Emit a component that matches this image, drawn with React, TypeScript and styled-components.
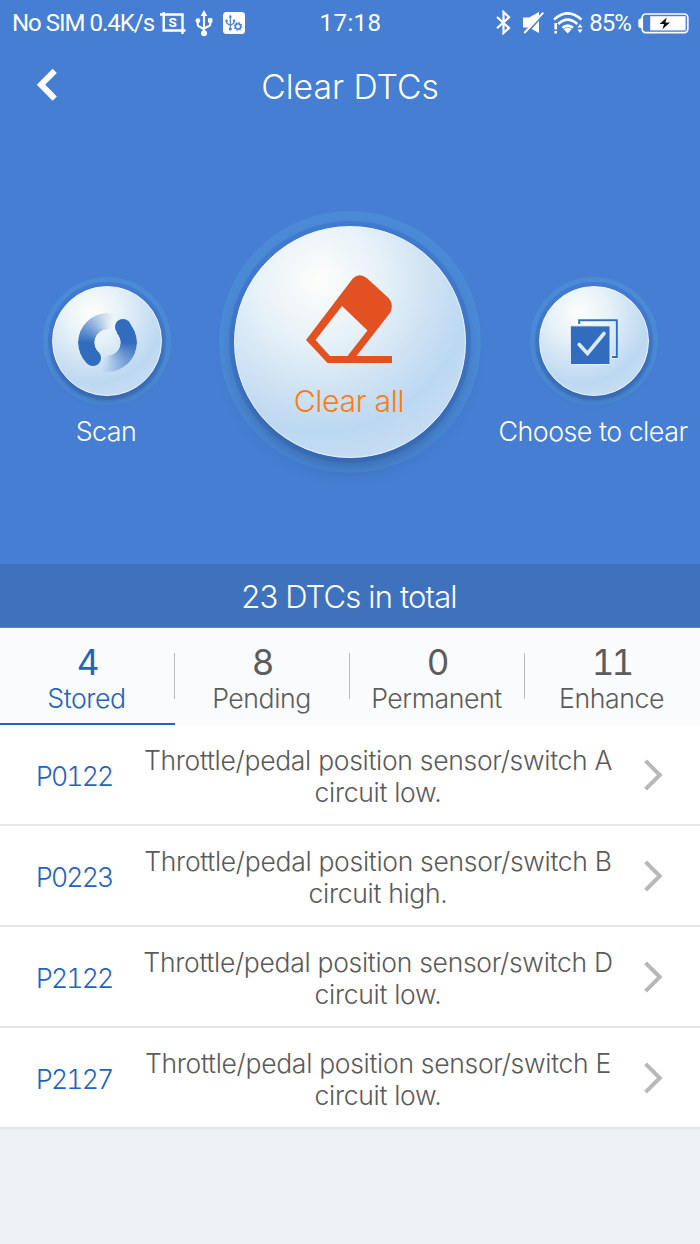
import React from 'react';
import styled, { createGlobalStyle } from 'styled-components';

const GlobalStyle = createGlobalStyle`
  *, *::before, *::after { box-sizing: border-box; }
  body { margin: 0; background: #edf1f5; font-family: Inter, "Liberation Sans", sans-serif; font-weight: 300; }
`;

const Screen = styled.div`
  width: 700px;
  height: 1244px;
  overflow: hidden;
  display: flex;
  flex-direction: column;
  background: #edf1f5;
`;

const Hero = styled.header`
  height: 564px;
  background: #457ed2;
  color: #fff;
`;

const StatusBar = styled.div`
  height: 46px;
  display: grid;
  grid-template-columns: 1fr auto 1fr;
  align-items: center;
  padding: 0 11px 0 12px;
  font-family: Roboto, "Liberation Sans", sans-serif;
  font-weight: 400;
  line-height: 46px;
`;

const StatusGroup = styled.div<{ $end?: boolean }>`
  display: flex;
  align-items: center;
  justify-content: ${p => (p.$end ? 'flex-end' : 'flex-start')};
  svg { display: block; flex: none; }
`;

const StatusText = styled.span<{ $track?: number; $gap?: number }>`
  font-size: 24px;
  letter-spacing: ${p => p.$track ?? 0}px;
  margin-left: ${p => p.$gap ?? 0}px;
  white-space: pre;
`;

const TitleBar = styled.div`
  height: 80px;
  display: grid;
  grid-template-columns: 100px 1fr 100px;
  align-items: center;
`;

const BackButton = styled.button`
  border: 0;
  padding: 0 0 5px 36px;
  background: none;
  display: flex;
`;

const Title = styled.h1`
  margin: 0;
  padding-top: 1px;
  text-align: center;
  font-size: 33.7px;
  font-weight: 300;
  line-height: 80px;
`;

const Actions = styled.div`
  padding-top: 85px;
  display: grid;
  grid-template-columns: 213px 274px 213px;
  justify-items: center;
  align-items: start;
`;

const Action = styled.div<{ $small?: boolean }>`
  display: flex;
  flex-direction: column;
  align-items: center;
  padding-top: ${p => (p.$small ? 66 : 0)}px;
`;

const Ring = styled.div<{ $size: number; $band: number }>`
  width: ${p => p.$size}px;
  height: ${p => p.$size}px;
  border-radius: 50%;
  border: ${p => p.$band}px solid #4b8ad6;
  background: #437bd0;
  display: flex;
  align-items: center;
  justify-content: center;
`;

const Disk = styled.button<{ $size: number }>`
  flex: none;
  width: ${p => p.$size}px;
  height: ${p => p.$size}px;
  padding: 0;
  border: 1.5px solid #eef6fd;
  border-radius: 50%;
  display: flex;
  flex-direction: column;
  align-items: center;
  justify-content: center;
  font: inherit;
  background: radial-gradient(circle at 36% 23%, #fdfefb 0%, #e6f1f8 28%, #d2e4f4 46%, #bcd8f1 66%, #cce0f5 90%, #d3e5f7 100%);
  box-shadow: 0 ${p => p.$size * 0.045}px ${p => p.$size * 0.07}px rgba(46, 88, 150, 0.6);
`;

const DiskLabel = styled.span`
  margin: 17px 2px 0 0;
  color: #fd7c14;
  font-size: 30.2px;
  letter-spacing: -0.3px;
  line-height: 40px;
`;

const ActionLabel = styled.span`
  margin: 8px 1px 0 0;
  font-size: 26.8px;
  letter-spacing: -0.5px;
  line-height: 36px;
  white-space: nowrap;
`;

const Swirl = styled.span`
  position: relative;
  width: 59px;
  height: 59px;
  margin: 2px 0 0 2px;
  &::before {
    content: '';
    position: absolute;
    inset: 0;
    border-radius: 50%;
    background: conic-gradient(#316cbe1c 0deg, #316cbe00 14deg, #316cbe00 44deg, #316cbe 45deg, #316cbe 90deg, #316cbe1c 180deg, #316cbe00 194deg, #316cbe00 224deg, #316cbe 225deg, #316cbe 270deg, #316cbe1c 360deg);
    mask: radial-gradient(circle, transparent 12.8px, #000 13.4px);
  }
`;

const SwirlCap = styled.i<{ $x: number; $y: number }>`
  position: absolute;
  left: ${p => p.$x}px;
  top: ${p => p.$y}px;
  width: 16px;
  height: 16px;
  border-radius: 50%;
  background: #316cbe;
`;

const Total = styled.div`
  height: 64px;
  padding-right: 2px;
  background: #3f72bd;
  border-bottom: 1px solid #6289c7;
  color: #fff;
  text-align: center;
  font-size: 31px;
  letter-spacing: -0.85px;
  line-height: 66px;
`;

const Tabs = styled.nav`
  height: 97px;
  display: grid;
  grid-template-columns: repeat(4, 175px);
  background: #fafbfd;
`;

const Tab = styled.button<{ $active?: boolean }>`
  position: relative;
  padding: 15px 2px 0 0;
  border: 0;
  border-bottom: 2px solid ${p => (p.$active ? '#2263bd' : 'transparent')};
  background: none;
  font: inherit;
  color: ${p => (p.$active ? '#2263bd' : '#5c5c5c')};
  display: flex;
  flex-direction: column;
  align-items: center;
  &:not(:first-child)::before {
    content: '';
    position: absolute;
    left: -1px;
    top: 25px;
    width: 1px;
    height: 46px;
    background: #b9bbbd;
  }
`;

const Count = styled.span`
  font-size: 35px;
  font-weight: 400;
  line-height: 38px;
  font-variant-numeric: tabular-nums;
  letter-spacing: -3px;
`;

const TabLabel = styled.span`
  font-size: 26.7px;
  letter-spacing: -0.45px;
  line-height: 34px;
`;

const List = styled.ul`
  margin: 0;
  padding: 0;
  list-style: none;
`;

const Row = styled.li`
  height: 101px;
  display: grid;
  grid-template-columns: 106px 470px 1fr;
  padding-left: 37px;
  align-items: center;
  background: #fff;
  border-bottom: 2px solid #e4e5e9;
`;

const Code = styled.span`
  color: #2463bd;
  font-size: 26.6px;
  font-variant-numeric: tabular-nums;
  letter-spacing: -1.8px;
  margin-left: -1px;
  padding-top: 3px;
`;

const Description = styled.p`
  margin: 0;
  padding-top: 3px;
  text-align: center;
  white-space: pre;
  color: #5a5a5a;
  font-size: 26.5px;
  letter-spacing: -0.3px;
  line-height: 32px;
`;

const rows = [
  ['P0122', 'A', 'low'],
  ['P0223', 'B', 'high'],
  ['P2122', 'D', 'low'],
  ['P2127', 'E', 'low'],
];

const tabs: [number, string][] = [[4, 'Stored'], [8, 'Pending'], [0, 'Permanent'], [11, 'Enhance']];

const ScreenshotIcon = () => (
  <svg width="26" height="24" viewBox="0 0 26 24" style={{ marginLeft: 6 }} fill="none" stroke="#fff" strokeWidth="2.4">
    <path d="M0 3.5H22.5V23M3.7 1V19.5H25.5" />
    <text x="12.6" y="16.2" fontSize="13.5" fontWeight="700" fill="#fff" stroke="none" textAnchor="middle" fontFamily="Roboto">S</text>
  </svg>
);

const UsbIcon = () => (
  <svg width="18" height="27" viewBox="0 0 18 27" style={{ marginLeft: 9 }} fill="none" stroke="#fff" strokeWidth="2.1">
    <path d="M9 4V22M2.7 11V14.5Q2.7 16 4 16.5L9 19M15.3 10V14Q15.3 15.3 14 16L9 18.5" />
    <path d="M9 0L12.3 6H5.7Z" fill="#fff" stroke="none" />
    <circle cx="9" cy="23.3" r="3" fill="#fff" stroke="none" />
    <circle cx="2.9" cy="10.6" r="2.4" fill="#fff" stroke="none" />
    <rect x="13" y="8.2" width="4.4" height="4.4" fill="#fff" stroke="none" />
  </svg>
);

const UsbDebugIcon = () => (
  <svg width="22" height="22" viewBox="0 0 22 22" style={{ marginLeft: 10 }} fill="none" stroke="#457ed2" strokeWidth="1.2">
    <rect width="22" height="22" rx="3.5" fill="#fff" stroke="none" />
    <path d="M7.3 4.5V17M3.5 8.5V11L7.3 13.5M11 8.5V11L7.3 13.5" />
    <path d="M7.3 2.4L9 5.6H5.6Z" fill="#457ed2" stroke="none" />
    <circle cx="7.3" cy="17" r="1.6" fill="#457ed2" stroke="none" />
    <circle cx="3.6" cy="8.8" r="1.2" fill="#457ed2" stroke="none" />
    <circle cx="11" cy="8.8" r="1.2" fill="#457ed2" stroke="none" />
    <circle cx="15" cy="14.4" r="2.6" strokeWidth="1.5" />
    <circle cx="15" cy="14.4" r="3.8" strokeWidth="1.2" strokeDasharray="1.4 1.58" />
  </svg>
);

const BluetoothIcon = () => (
  <svg width="15" height="26" viewBox="0 0 15 26" fill="none" stroke="#fff" strokeWidth="2.2">
    <path d="M1 7L13 18L7.5 23V2L13 7.3L1 18.3" />
  </svg>
);

const MutedIcon = () => (
  <svg width="21" height="22" viewBox="0 0 21 22" style={{ marginLeft: 12 }}>
    <path d="M0 5.5H6L16 0V21L6 15.5H0Z" fill="#fff" />
    <path d="M2.9 22L21.9 1" stroke="#457ed2" strokeWidth="1.8" />
    <path d="M1.3 21L20.3 0.6" stroke="#fff" strokeWidth="1.9" />
  </svg>
);

const WifiIcon = () => (
  <svg width="30" height="22" viewBox="0 0 30 22" style={{ marginLeft: 9 }} fill="none" stroke="#fff" strokeWidth="2.6">
    <path d="M1 7.6Q14.5 -5 28.5 7.6M5.2 12Q14.5 3.3 24.3 12M9.4 15.8Q14.8 11.3 20 15.8" />
    <path d="M10.7 17.2Q14.7 14 18.7 17.2L14.7 21.5ZM27 12L29.6 15.6H24.4ZM27 21L24.4 17.4H29.6Z" fill="#fff" stroke="none" />
    <path d="M2.7 11V17.5M2.7 19V21.6" strokeWidth="2.6" />
  </svg>
);

const BatteryIcon = () => (
  <svg width="51" height="21" viewBox="0 0 51 21" style={{ marginLeft: 7 }}>
    <path d="M4 5.5H2.5Q0.3 5.5 0.3 8V13Q0.3 15 2.5 15H4Z" fill="#fff" />
    <rect x="4.2" y="1" width="45.6" height="18.6" rx="3.5" fill="none" stroke="#fff" strokeWidth="1.7" />
    <rect x="12.2" y="3.2" width="35.4" height="14.2" fill="#fff" />
    <path d="M28.8 4.5L21.5 11H26L24.5 16.2L32 9.5H27.4Z" fill="#111" />
  </svg>
);

const EraserIcon = () => (
  <svg width="86" height="89" viewBox="0 0 86 89" style={{ margin: '12px 2px 0 0' }}>
    <path fill="#e25122" fillRule="evenodd" d="M47 3.2Q53.5 -2.5 61 3.2L82 22.5Q88.5 29.5 84 38L50.5 81H86V88H21.5L0 65ZM36 31L9.5 65L24 81H41.5L61.5 55.5Z" />
  </svg>
);

const ChooseIcon = () => (
  <svg width="48" height="46" viewBox="0 0 48 46" style={{ margin: '2px 0 0 0' }} fill="none">
    <path d="M9.2 6V1.2H46.8V38H41.5" stroke="#fff" strokeOpacity=".7" strokeWidth="3.4" />
    <path d="M9.2 5V1.2H46.8V38H42" stroke="#316cbe" strokeWidth="2" />
    <rect x=".4" y="6.9" width="39.6" height="38.6" fill="#316cbe" stroke="#e8f2fb" strokeWidth=".9" />
    <path d="M9.2 25.5L17.5 34.5L34 14.5" stroke="#dceaf7" strokeWidth="3.6" strokeLinecap="round" />
  </svg>
);

const Chevron = () => (
  <svg width="19" height="32" viewBox="0 0 19 32" style={{ justifySelf: 'start', marginLeft: 31 }} fill="none" stroke="#b8b8b8" strokeWidth="4">
    <path d="M1.6 1.8L15.8 16L1.6 30.2" />
  </svg>
);

export default function App() {
  return (
    <Screen>
      <GlobalStyle />
      <Hero>
        <StatusBar>
          <StatusGroup>
            <StatusText $track={-1}>No SIM 0.4K/s</StatusText>
            <ScreenshotIcon />
            <UsbIcon />
            <UsbDebugIcon />
          </StatusGroup>
          <StatusText $track={0.4}>17:18</StatusText>
          <StatusGroup $end>
            <BluetoothIcon />
            <MutedIcon />
            <WifiIcon />
            <StatusText $track={-0.9} $gap={6}>85%</StatusText>
            <BatteryIcon />
          </StatusGroup>
        </StatusBar>
        <TitleBar>
          <BackButton aria-label="Back">
            <svg width="22" height="33" viewBox="0 0 22 33" fill="none" stroke="#fff" strokeWidth="6">
              <path d="M18.7 2.8L5 16.7L18.7 30.6" />
            </svg>
          </BackButton>
          <Title>Clear DTCs</Title>
        </TitleBar>
        <Actions>
          <Action $small>
            <Ring $size={128} $band={5}>
              <Disk $size={110} aria-label="Scan">
                <Swirl>
                  <SwirlCap $x={36.5} $y={6} />
                  <SwirlCap $x={6.5} $y={37} />
                </Swirl>
              </Disk>
            </Ring>
            <ActionLabel>Scan</ActionLabel>
          </Action>
          <Action>
            <Ring $size={262} $band={10}>
              <Disk $size={232}>
                <EraserIcon />
                <DiskLabel>Clear all</DiskLabel>
              </Disk>
            </Ring>
          </Action>
          <Action $small>
            <Ring $size={128} $band={5}>
              <Disk $size={110} aria-label="Choose to clear">
                <ChooseIcon />
              </Disk>
            </Ring>
            <ActionLabel>Choose to clear</ActionLabel>
          </Action>
        </Actions>
      </Hero>
      <Total>23 DTCs in total</Total>
      <Tabs>
        {tabs.map(([count, label], i) => (
          <Tab key={label} $active={i === 0}>
            <Count>{count}</Count>
            <TabLabel>{label}</TabLabel>
          </Tab>
        ))}
      </Tabs>
      <List>
        {rows.map(([code, sw, level]) => (
          <Row key={code}>
            <Code>{code}</Code>
            <Description>{`Throttle/pedal position sensor/switch ${sw}\ncircuit ${level}.`}</Description>
            <Chevron />
          </Row>
        ))}
      </List>
    </Screen>
  );
}
